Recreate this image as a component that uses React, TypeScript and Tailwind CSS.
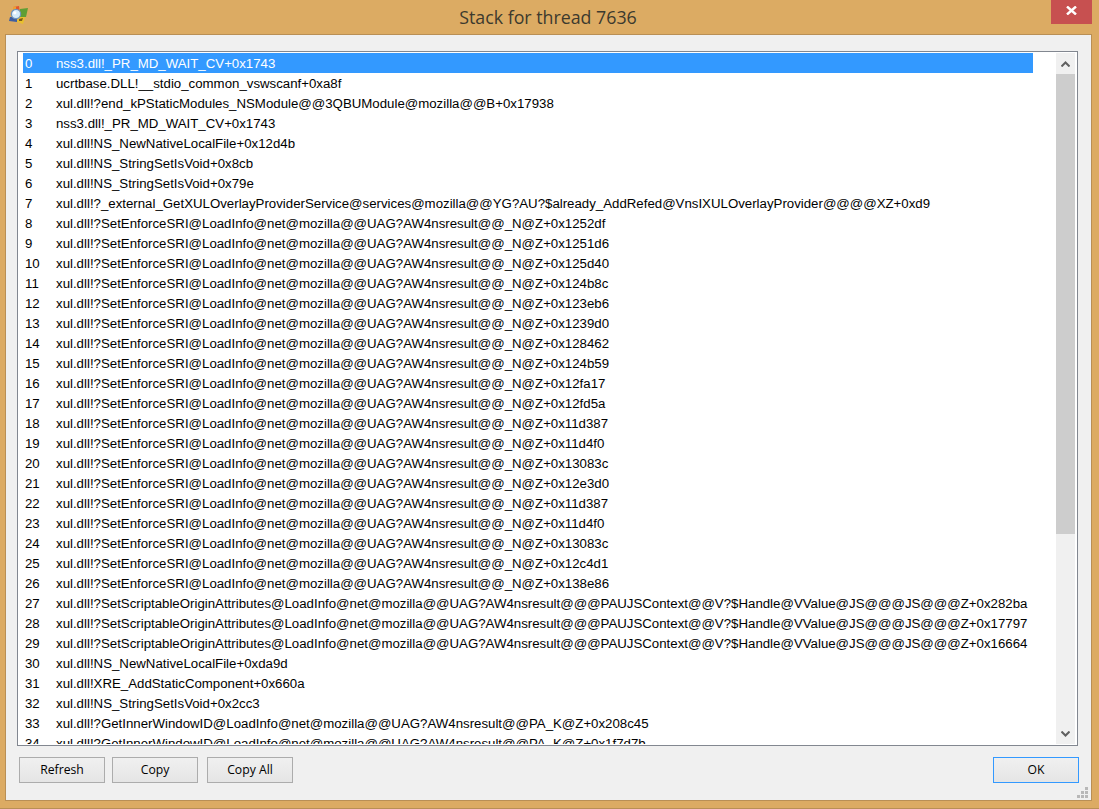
import React from "react";

const frames: string[] = [
  "nss3.dll!_PR_MD_WAIT_CV+0x1743",
  "ucrtbase.DLL!__stdio_common_vswscanf+0xa8f",
  "xul.dll!?end_kPStaticModules_NSModule@@3QBUModule@mozilla@@B+0x17938",
  "nss3.dll!_PR_MD_WAIT_CV+0x1743",
  "xul.dll!NS_NewNativeLocalFile+0x12d4b",
  "xul.dll!NS_StringSetIsVoid+0x8cb",
  "xul.dll!NS_StringSetIsVoid+0x79e",
  "xul.dll!?_external_GetXULOverlayProviderService@services@mozilla@@YG?AU?$already_AddRefed@VnsIXULOverlayProvider@@@@XZ+0xd9",
  "xul.dll!?SetEnforceSRI@LoadInfo@net@mozilla@@UAG?AW4nsresult@@_N@Z+0x1252df",
  "xul.dll!?SetEnforceSRI@LoadInfo@net@mozilla@@UAG?AW4nsresult@@_N@Z+0x1251d6",
  "xul.dll!?SetEnforceSRI@LoadInfo@net@mozilla@@UAG?AW4nsresult@@_N@Z+0x125d40",
  "xul.dll!?SetEnforceSRI@LoadInfo@net@mozilla@@UAG?AW4nsresult@@_N@Z+0x124b8c",
  "xul.dll!?SetEnforceSRI@LoadInfo@net@mozilla@@UAG?AW4nsresult@@_N@Z+0x123eb6",
  "xul.dll!?SetEnforceSRI@LoadInfo@net@mozilla@@UAG?AW4nsresult@@_N@Z+0x1239d0",
  "xul.dll!?SetEnforceSRI@LoadInfo@net@mozilla@@UAG?AW4nsresult@@_N@Z+0x128462",
  "xul.dll!?SetEnforceSRI@LoadInfo@net@mozilla@@UAG?AW4nsresult@@_N@Z+0x124b59",
  "xul.dll!?SetEnforceSRI@LoadInfo@net@mozilla@@UAG?AW4nsresult@@_N@Z+0x12fa17",
  "xul.dll!?SetEnforceSRI@LoadInfo@net@mozilla@@UAG?AW4nsresult@@_N@Z+0x12fd5a",
  "xul.dll!?SetEnforceSRI@LoadInfo@net@mozilla@@UAG?AW4nsresult@@_N@Z+0x11d387",
  "xul.dll!?SetEnforceSRI@LoadInfo@net@mozilla@@UAG?AW4nsresult@@_N@Z+0x11d4f0",
  "xul.dll!?SetEnforceSRI@LoadInfo@net@mozilla@@UAG?AW4nsresult@@_N@Z+0x13083c",
  "xul.dll!?SetEnforceSRI@LoadInfo@net@mozilla@@UAG?AW4nsresult@@_N@Z+0x12e3d0",
  "xul.dll!?SetEnforceSRI@LoadInfo@net@mozilla@@UAG?AW4nsresult@@_N@Z+0x11d387",
  "xul.dll!?SetEnforceSRI@LoadInfo@net@mozilla@@UAG?AW4nsresult@@_N@Z+0x11d4f0",
  "xul.dll!?SetEnforceSRI@LoadInfo@net@mozilla@@UAG?AW4nsresult@@_N@Z+0x13083c",
  "xul.dll!?SetEnforceSRI@LoadInfo@net@mozilla@@UAG?AW4nsresult@@_N@Z+0x12c4d1",
  "xul.dll!?SetEnforceSRI@LoadInfo@net@mozilla@@UAG?AW4nsresult@@_N@Z+0x138e86",
  "xul.dll!?SetScriptableOriginAttributes@LoadInfo@net@mozilla@@UAG?AW4nsresult@@@PAUJSContext@@V?$Handle@VValue@JS@@@JS@@@Z+0x282ba",
  "xul.dll!?SetScriptableOriginAttributes@LoadInfo@net@mozilla@@UAG?AW4nsresult@@@PAUJSContext@@V?$Handle@VValue@JS@@@JS@@@Z+0x17797",
  "xul.dll!?SetScriptableOriginAttributes@LoadInfo@net@mozilla@@UAG?AW4nsresult@@@PAUJSContext@@V?$Handle@VValue@JS@@@JS@@@Z+0x16664",
  "xul.dll!NS_NewNativeLocalFile+0xda9d",
  "xul.dll!XRE_AddStaticComponent+0x660a",
  "xul.dll!NS_StringSetIsVoid+0x2cc3",
  "xul.dll!?GetInnerWindowID@LoadInfo@net@mozilla@@UAG?AW4nsresult@@PA_K@Z+0x208c45",
  "xul.dll!?GetInnerWindowID@LoadInfo@net@mozilla@@UAG?AW4nsresult@@PA_K@Z+0x1f7d7b",
];

function AppIcon() {
  return (
    <svg width="20" height="18" viewBox="0 0 20 18" className="shrink-0">
      <path d="M4 1 L10 0 L11 8 L4 8 Z" fill="#e2572b" />
      <path d="M4 1 L7 0.5 L7 4 L4 4 Z" fill="#f0a030" />
      <path d="M11 3 L19 2 L17 11 L10 11 Z" fill="#5f9e34" />
      <path d="M1 11 L8 11 L8 16 L0 15 Z" fill="#3f5fa0" />
      <path d="M9 11 L16 11 L14 18 L8 16 Z" fill="#e9c02e" />
      <path d="M10 13 L14 12 L13 15 L10 15 Z" fill="#7a5a18" />
      <circle cx="7" cy="8" r="4.6" fill="#d6ecfb" stroke="#6f94bd" strokeWidth="1.2" />
      <circle cx="5.8" cy="6.8" r="1.6" fill="#ffffff" />
    </svg>
  );
}

function Btn({ label, primary }: { label: string; primary?: boolean }) {
  return (
    <button
      className={
        "block w-[86px] h-[26px] border bg-gradient-to-b from-[#f0f0f0] to-[#e5e5e5] text-[12.2px] text-black font-['Open_Sans',sans-serif] " +
        (primary ? "border-[#3399ff]" : "border-[#acacac]")
      }
    >
      {label}
    </button>
  );
}

function Chevron({ up }: { up?: boolean }) {
  return (
    <svg width="9" height="6" viewBox="0 0 9 6">
      <path
        d={up ? "M0.5 5.5 L4.5 1.5 L8.5 5.5" : "M0.5 0.5 L4.5 4.5 L8.5 0.5"}
        fill="none"
        stroke="#606060"
        strokeWidth="2"
      />
    </svg>
  );
}

export default function App() {
  return (
    <div className="w-[1099px] h-[809px] bg-[#dcab63] border-b border-[#b98f55] flex flex-col overflow-hidden">
      <div className="h-[34px] shrink-0 grid grid-cols-[1fr_auto_1fr] items-start">
        <div className="pl-[9px] pt-[6px]">
          <AppIcon />
        </div>
        <div className="pt-[5px] pr-[3px] text-[17.8px] leading-[24px] text-[#3c3a2e] font-['Open_Sans',sans-serif]">
          Stack for thread 7636
        </div>
        <div className="flex justify-end pr-[7px]">
          <div className="w-[41px] h-[24px] bg-[#c75050] flex items-center justify-center pb-[3px]">
            <svg width="11" height="9" viewBox="0 0 11 9">
              <path d="M1 0.5 L10 8.5 M10 0.5 L1 8.5" stroke="#fff" strokeWidth="2.4" />
            </svg>
          </div>
        </div>
      </div>
      <div className="ml-[5px] mr-[7px] mb-[7px] flex-1 min-h-0 border border-[#b98f55] bg-[#f0f0f0] flex flex-col pt-[16px] px-[11px]">
        <div className="h-[695px] w-[1061px] shrink-0 border border-[#828790] bg-white flex pl-[5px] pt-[1px] pr-[2px] pb-[1px]">
          <div className="w-[1010px] shrink-0">
            <div className="h-[691px] w-[1032px] overflow-hidden font-['Liberation_Sans',Arial,sans-serif] text-[13.25px] text-black">
              {frames.map((f, i) => (
                <div
                  key={i}
                  className={
                    "h-[20px] pt-[1px] leading-[20px] flex items-start whitespace-nowrap " +
                    (i === 0 ? "bg-[#3399ff] text-white w-[1010px]" : "")
                  }
                >
                  <span className="w-[33px] pl-[2px] shrink-0">{i}</span>
                  <span>{f}</span>
                </div>
              ))}
            </div>
          </div>
          <div className="ml-auto w-[19px] shrink-0 bg-[#f0f0f0] flex flex-col">
            <div className="h-[21px] shrink-0 flex items-center justify-center">
              <Chevron up />
            </div>
            <div className="h-[460px] shrink-0 bg-[#cdcdcd]" />
            <div className="flex-1" />
            <div className="h-[21px] shrink-0 flex items-center justify-center">
              <Chevron />
            </div>
          </div>
        </div>
        <div className="mt-[11px] flex items-start">
          <div className="ml-[2px]">
            <Btn label="Refresh" />
          </div>
          <div className="ml-[7px]">
            <Btn label="Copy" />
          </div>
          <div className="ml-[9px]">
            <Btn label="Copy All" />
          </div>
          <div className="ml-auto mr-[1px]">
            <Btn label="OK" primary />
          </div>
        </div>
        <div className="flex-1 relative">
          <svg width="12" height="12" viewBox="0 0 12 12" className="absolute right-[-9px] bottom-[1px]">
            <g fill="#b8b8b8">
              <rect x="8" y="0" width="3" height="3" />
              <rect x="4" y="4" width="3" height="3" />
              <rect x="8" y="4" width="3" height="3" />
              <rect x="0" y="8" width="3" height="3" />
              <rect x="4" y="8" width="3" height="3" />
              <rect x="8" y="8" width="3" height="3" />
            </g>
          </svg>
        </div>
      </div>
    </div>
  );
}
